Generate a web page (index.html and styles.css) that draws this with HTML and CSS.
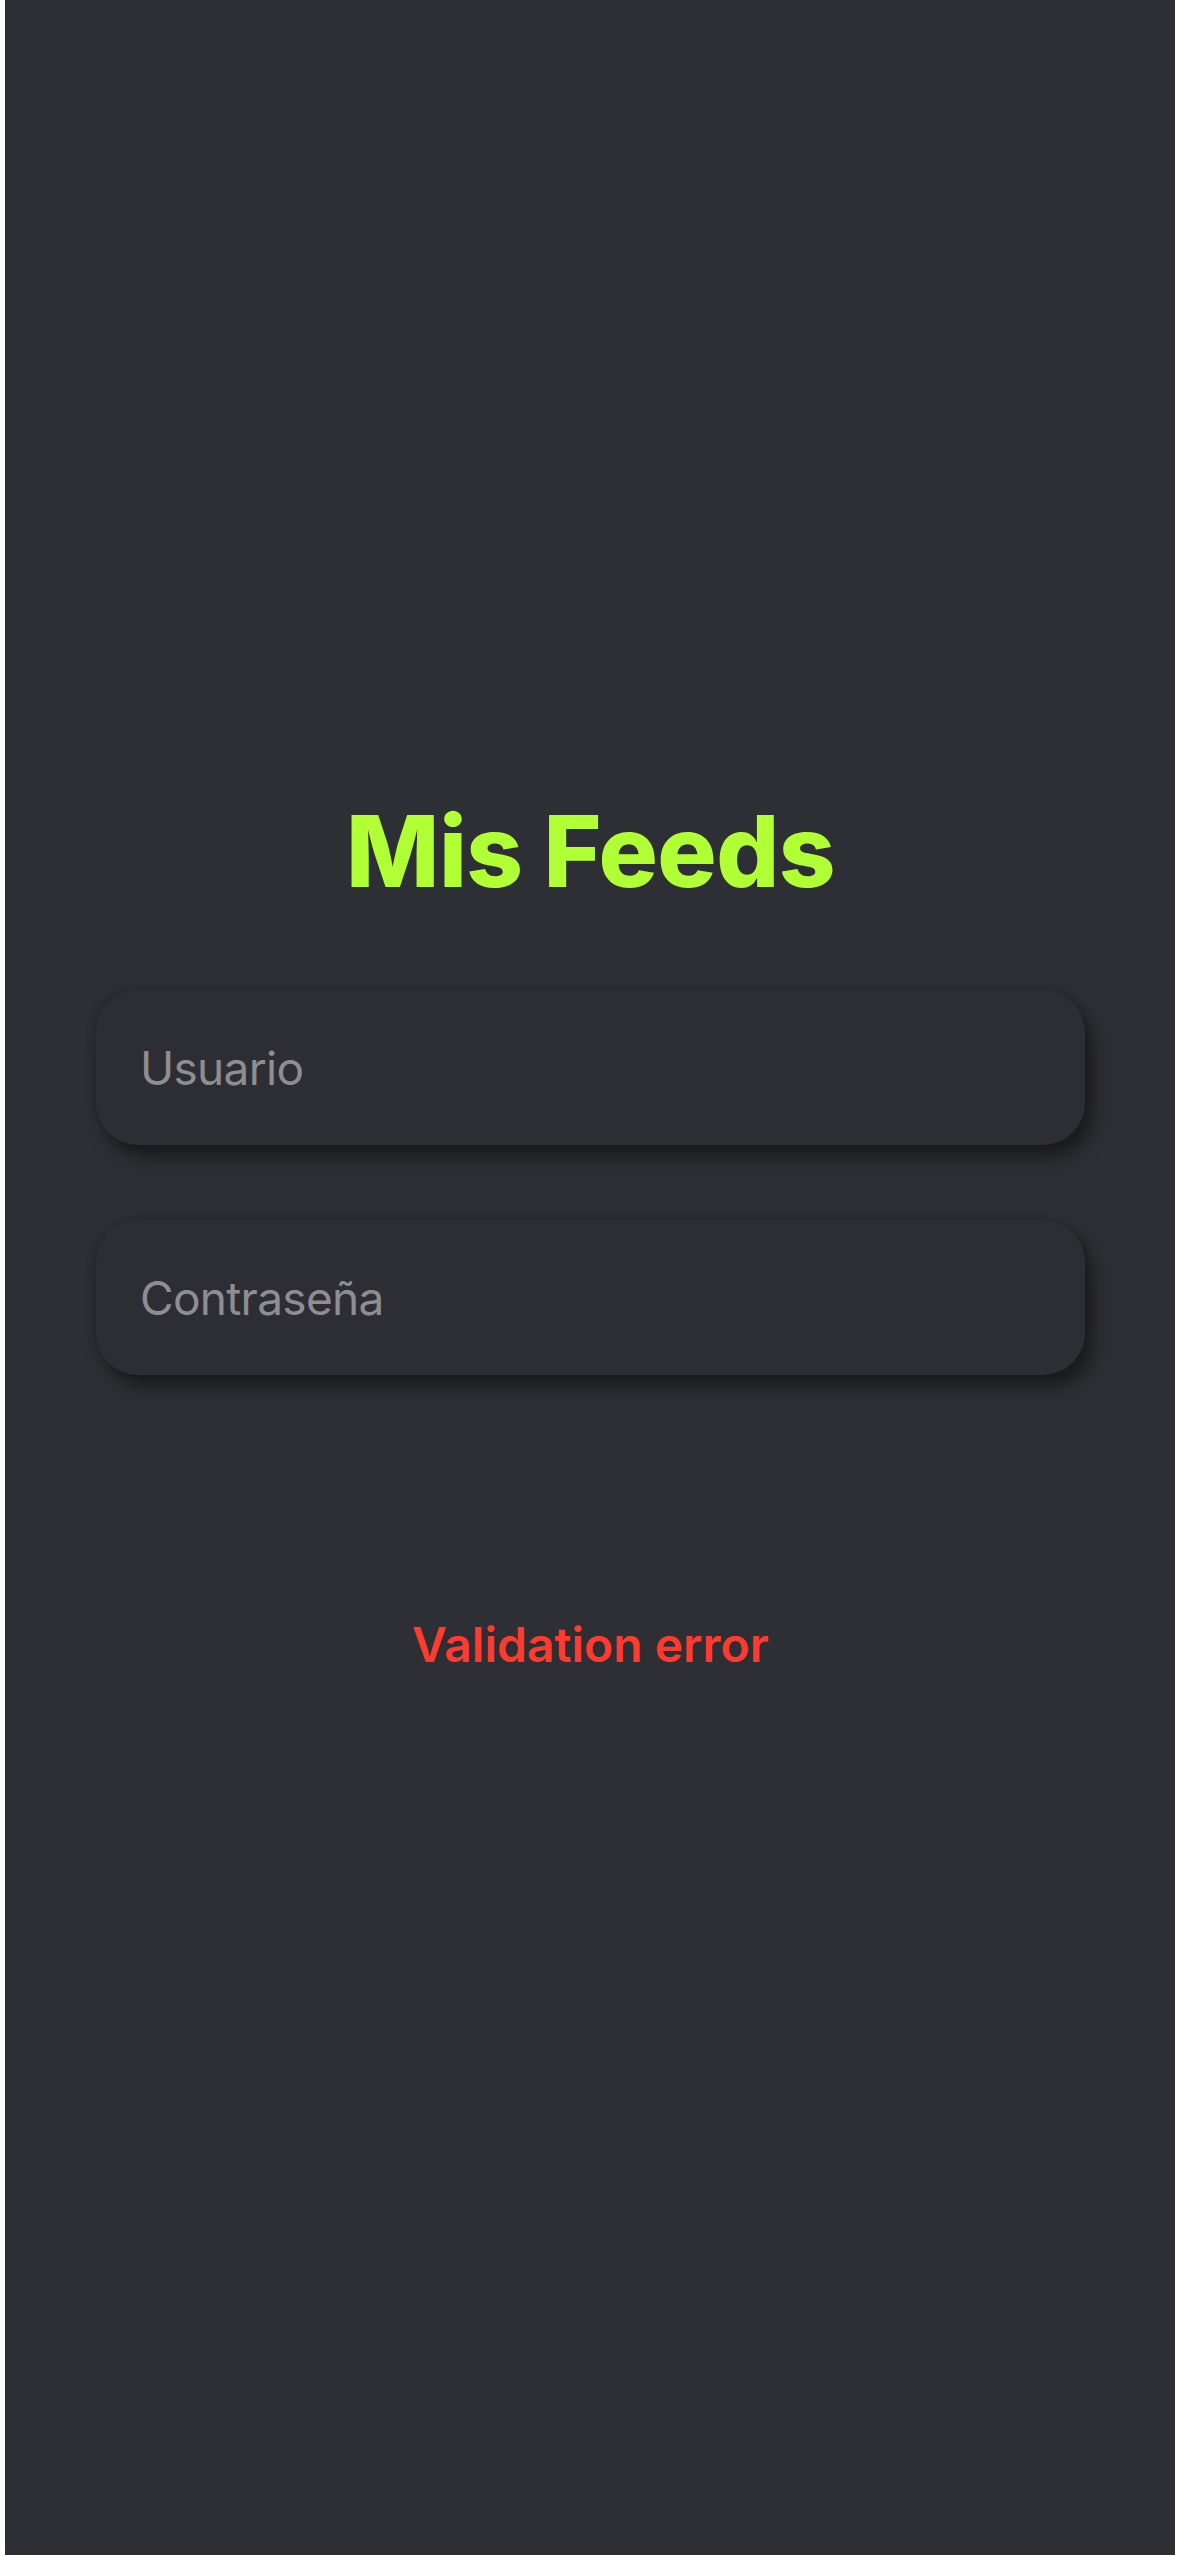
FILE: index.html
```html
<!DOCTYPE html>
<html lang="es">
<head>
<meta charset="utf-8">
<title>Mis Feeds</title>
<link rel="stylesheet" href="styles.css">
</head>
<body>
<main class="screen">
  <h1 class="title">Mis Feeds</h1>
  <form class="form">
    <div class="field"><span class="placeholder">Usuario</span></div>
    <div class="field"><span class="placeholder">Contraseña</span></div>
  </form>
  <p class="error">Validation error</p>
</main>
</body>
</html>
```
FILE: styles.css
```css
html, body {
  margin: 0;
  padding: 0;
  background: #ffffff;
}
.screen {
  margin-left: 5px;
  width: 1170px;
  height: 2555px;
  background: #2e2f34;
  display: flex;
  flex-direction: column;
  align-items: stretch;
  padding: 793px 90px 0 91px;
  box-sizing: border-box;
  font-family: Inter, "Noto Sans", sans-serif;
}
.title {
  margin: 0;
  text-align: center;
  color: #b1ff35;
  font-size: 99px;
  font-weight: 800;
  line-height: 117px;
  letter-spacing: -0.6px;
}
.form {
  display: flex;
  flex-direction: column;
  gap: 75px;
  margin-top: 80px;
}
.field {
  height: 155px;
  border-radius: 42px;
  background: #2d2e33;
  box-shadow: 8px 12px 18px rgba(0, 0, 0, 0.45), -2px -2px 8px rgba(0, 0, 0, 0.12);
  display: flex;
  align-items: center;
  padding-left: 44px;
}
.placeholder {
  color: #8d8d92;
  font-size: 46px;
  font-weight: 400;
  letter-spacing: -0.7px;
}
.error {
  margin: 240px 0 0;
  text-align: center;
  color: #ff3b30;
  font-size: 48px;
  font-weight: 600;
  line-height: 60px;
}
```
